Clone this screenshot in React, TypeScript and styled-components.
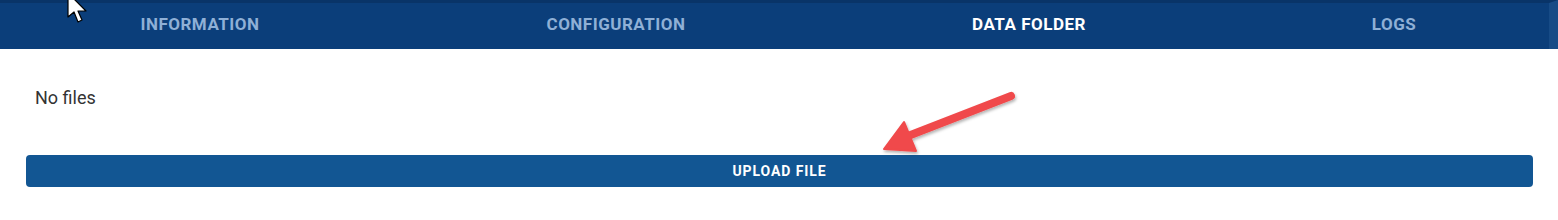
import React from 'react';
import styled, { createGlobalStyle } from 'styled-components';

const GlobalStyle = createGlobalStyle`
  body {
    margin: 0;
    background: #ffffff;
    font-family: Roboto, "Liberation Sans", sans-serif;
  }
`;

const Page = styled.section`
  position: relative;
  width: 1558px;
  height: 220px;
  overflow: hidden;
  background: #fff;
`;

const TabBar = styled.nav`
  display: grid;
  grid-template-columns: 400px 432px 394px 1fr;
  height: 49px;
  background: #0b3e7a;
  border-top: 3px solid #093468;
  border-right: 9px solid #174b86;
  box-sizing: border-box;
`;

const Tab = styled.div<{ $active?: boolean; $shift?: number }>`
  display: flex;
  align-items: center;
  justify-content: center;
  padding-bottom: 5px;
  padding-left: ${(p) => p.$shift ?? 0}px;
  font-size: 17px;
  font-weight: 700;
  letter-spacing: 0.5px;
  text-transform: uppercase;
  color: ${(p) => (p.$active ? '#ffffff' : '#8fb0d6')};
`;

const Content = styled.div`
  padding: 39px 25px 0 26px;
`;

const Empty = styled.p`
  margin: 0 0 0 9px;
  font-size: 18px;
  color: #333;
  line-height: 20px;
`;

const UploadButton = styled.button`
  display: block;
  width: 1507px;
  height: 32px;
  margin-top: 47px;
  border: none;
  border-radius: 4px;
  background: #125693;
  color: #fff;
  font-family: Roboto, "Liberation Sans", sans-serif;
  font-size: 14px;
  font-weight: 700;
  letter-spacing: 0.9px;
  text-transform: uppercase;
`;

const Overlay = styled.svg`
  position: absolute;
  left: 0;
  top: 0;
  pointer-events: none;
`;

const tabs = [
  { label: 'Information', shift: 0 },
  { label: 'Configuration', shift: 0 },
  { label: 'Data folder', shift: 0 },
  { label: 'Logs', shift: 13 },
];

const App: React.FC = () => {
  return (
    <Page>
      <GlobalStyle />
      <TabBar>
        {tabs.map((t) => (
          <Tab key={t.label} $active={t.label === 'Data folder'} $shift={t.shift}>
            {t.label}
          </Tab>
        ))}
      </TabBar>
      <Content>
        <Empty>No files</Empty>
        <UploadButton type="button">Upload file</UploadButton>
      </Content>

      {/* annotation arrow */}
      <Overlay width="1558" height="220">
        <defs>
          <filter id="sh" x="-20%" y="-20%" width="140%" height="160%">
            <feDropShadow dx="1" dy="2" stdDeviation="1.5" floodColor="#000" floodOpacity="0.3" />
          </filter>
        </defs>
        <g filter="url(#sh)" fill="#f04a4b" stroke="#f04a4b">
          <line x1="1011" y1="96" x2="908" y2="136" strokeWidth="8" strokeLinecap="round" />
          <polygon points="884,149 904,122 916,151" strokeWidth="2" strokeLinejoin="round" />
        </g>
        {/* mouse cursor */}
        <path
          d="M68 -7 L68 17 L74 12 L78 22 L82 20 L78 11 L86 11 Z"
          fill="#fff"
          stroke="#000"
          strokeWidth="1.2"
          strokeLinejoin="round"
        />
      </Overlay>
    </Page>
  );
};

export default App;
